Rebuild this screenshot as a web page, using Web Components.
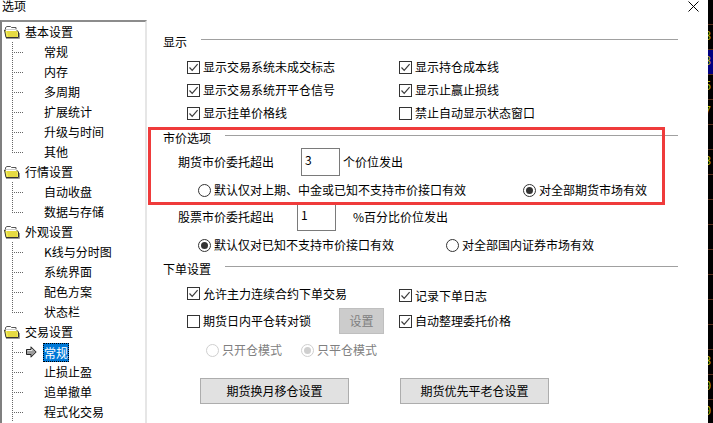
<!DOCTYPE html>
<html>
<head>
<meta charset="utf-8">
<title>选项</title>
<style>
html,body{margin:0;padding:0;background:#fff;width:713px;height:423px;overflow:hidden;}
</style>
</head>
<body>
<x-options-dialog></x-options-dialog>
<script>
(function () {
  const FONT = `"Noto Sans CJK SC","Liberation Sans",sans-serif`;

  /* =========================
    CHECKBOX
  ========================= */
  class XCheck extends HTMLElement {
    constructor() {
      super();
      this.attachShadow({ mode: "open" });
      const mark = this.hasAttribute("checked")
        ? `<svg width="11" height="11" viewBox="0 0 11 11"><path d="M1.5 5.5 L4.2 8.3 L9.6 2.2" fill="none" stroke="#3c3c3c" stroke-width="1.2"/></svg>`
        : "";
      this.shadowRoot.innerHTML = `
        <style>
        :host{display:flex;align-items:center;height:100%;}
        .box{width:11px;height:11px;border:1px solid #333;background:#fff;margin-right:3px;flex:none;}
        svg{display:block;}
        span{white-space:nowrap;}
        </style>
        <div class="box">${mark}</div><span><slot></slot></span>`;
    }
  }
  customElements.define("x-check", XCheck);

  /* =========================
    RADIO
  ========================= */
  class XRadio extends HTMLElement {
    constructor() {
      super();
      this.attachShadow({ mode: "open" });
      const off = this.hasAttribute("disabled");
      const line = off ? "#cfcfcf" : "#333";
      const dot = off ? "#cfcfcf" : "#333";
      this.shadowRoot.innerHTML = `
        <style>
        :host{display:flex;align-items:center;height:100%;color:${off ? "#808080" : "#000"};}
        .ring{width:11px;height:11px;border:1px solid ${line};border-radius:50%;margin-right:3px;display:flex;align-items:center;justify-content:center;flex:none;background:#fff;}
        .dot{width:7px;height:7px;border-radius:50%;background:${dot};}
        span{white-space:nowrap;}
        </style>
        <div class="ring">${this.hasAttribute("checked") ? '<div class="dot"></div>' : ""}</div><span><slot></slot></span>`;
    }
  }
  customElements.define("x-radio", XRadio);

  /* =========================
    SECTION TITLE WITH RULE
  ========================= */
  class XSection extends HTMLElement {
    constructor() {
      super();
      this.attachShadow({ mode: "open" });
      this.shadowRoot.innerHTML = `
        <style>
        :host{display:flex;height:20px;align-items:center;}
        .rule{flex:1;height:1px;background:#a0a0a0;margin:-5px 0 0 14px;}
        </style>
        <span><slot></slot></span><div class="rule"></div>`;
    }
  }
  customElements.define("x-section", XSection);

  /* =========================
    TEXT BOX
  ========================= */
  class XField extends HTMLElement {
    constructor() {
      super();
      this.attachShadow({ mode: "open" });
      this.shadowRoot.innerHTML = `
        <style>
        :host{display:block;box-sizing:border-box;width:39px;height:28px;border:1px solid #7a7a7a;background:#fff;padding:3px 0 0 3px;line-height:16px;flex:none;}
        </style>
        <slot></slot>`;
    }
  }
  customElements.define("x-field", XField);

  /* =========================
    BUTTON
  ========================= */
  class XButton extends HTMLElement {
    constructor() {
      super();
      this.attachShadow({ mode: "open" });
      const off = this.hasAttribute("disabled");
      this.shadowRoot.innerHTML = `
        <style>
        :host{display:flex;box-sizing:border-box;align-items:center;justify-content:center;height:26px;background:${off ? "#cccccc" : "#e1e1e1"};border:1px solid ${off ? "#bfbfbf" : "#adadad"};color:${off ? "#808080" : "#000"};white-space:nowrap;}
        </style>
        <slot></slot>`;
    }
  }
  customElements.define("x-button", XButton);

  /* =========================
    NAV TREE
  ========================= */
  const FOLDER = `<svg width="16" height="14" viewBox="0 0 16 14">
    <path d="M1.5 4 V2.5 L3 1.5 H6.5 L7.5 2.5 H12 V4" fill="#fff" stroke="#555" stroke-width="1"/>
    <path d="M0.5 5 H12.5 L14.5 7 V12.5 H2 Z" fill="#f4ee58" stroke="#333" stroke-width="1"/>
    <path d="M2 4.5 H12.5 V6 H2 Z" fill="#fff"/>
    <path d="M3 7 H13 M3.5 9 H13 M4 11 H13" stroke="#d6c62c" stroke-width="1"/>
    <path d="M2 13.5 H15.5 V8" fill="none" stroke="#9a9a9a" stroke-width="1"/>
  </svg>`;

  const ARROW = `<svg width="11" height="12" viewBox="0 0 11 12">
    <path d="M0.5 3.5 H5 V0.8 L10.2 6 L5 11.2 V8.5 H0.5 Z" fill="#9c9c9c" stroke="#222" stroke-width="1"/>
    <path d="M1.5 4.5 H6 V3" fill="none" stroke="#e4e4e4" stroke-width="1"/>
  </svg>`;

  const TREE = [
    ["基本设置", ["常规", "内存", "多周期", "扩展统计", "升级与时间", "其他"]],
    ["行情设置", ["自动收盘", "数据与存储"]],
    ["外观设置", ["K线与分时图", "系统界面", "配色方案", "状态栏"]],
    ["交易设置", ["常规", "止损止盈", "追单撤单", "程式化交易"]],
  ];

  class XTree extends HTMLElement {
    constructor() {
      super();
      this.attachShadow({ mode: "open" });
      let html = "";
      TREE.forEach((group, g) => {
        html += `<div class="row head"><span class="ico">${FOLDER}</span><span>${group[0]}</span></div>`;
        group[1].forEach((name, i) => {
          const last = i === group[1].length - 1 && g < TREE.length - 1;
          const sel = g === 3 && i === 0;
          html += `<div class="row child${last ? " last" : ""}">
            <span class="dots"></span>
            <span class="mark">${sel ? ARROW : ""}</span>
            <span class="${sel ? "sel" : "txt"}">${name}</span>
          </div>`;
        });
      });
      this.shadowRoot.innerHTML = `
        <style>
        :host{display:block;box-sizing:border-box;width:147px;height:403px;overflow:hidden;border-top:2px solid #8c8c8c;border-left:2px solid #7f7f7f;border-right:2px solid #e6e6e6;background:#fff;flex:none;}
        .row{display:flex;align-items:center;height:20px;white-space:nowrap;}
        .head{padding-left:2px;margin-top:0;}
        .ico{width:21px;height:14px;flex:none;}
        .ico svg{display:block;}
        .child{
          padding-left:10px;
          background:repeating-linear-gradient(#666 0 1px,transparent 1px 2px) no-repeat 10px 0 / 1px 100%;
        }
        .child.last{background-size:1px 50%;}
        .dots{width:12px;height:1px;flex:none;background:repeating-linear-gradient(90deg,#666 0 1px,transparent 1px 2px);}
        .mark{width:20px;height:12px;flex:none;padding-left:2px;box-sizing:border-box;}
        .mark svg{display:block;}
        .txt{margin-left:0;}
        .sel{margin-left:-1px;padding:0 1px;height:19px;line-height:19px;width:24px;box-sizing:content-box;background:#0078d7;color:#fff;outline:1px dotted #000;outline-offset:-1px;}
        </style>
        ${html}`;
    }
  }
  customElements.define("x-tree", XTree);

  /* =========================
    BACKGROUND QUOTE STRIP
  ========================= */
  class XQuoteStrip extends HTMLElement {
    constructor() {
      super();
      this.attachShadow({ mode: "open" });
      const cells = ["", "3", "3", "5", "7", "", "3", "", "", "", "", "", "", "", "3", "0", "0"];
      this.shadowRoot.innerHTML = `
        <style>
        :host{display:block;width:5px;height:423px;background:#000;overflow:hidden;flex:none;}
        .cell{box-sizing:border-box;height:25px;border-bottom:1px solid #5a2f1c;color:#b4b400;font:12px/24px "Liberation Mono",monospace;text-indent:-4px;white-space:nowrap;overflow:hidden;}
        .cell:first-child{height:21px;}
        .hot{background:#000080;}
        </style>
        ${cells.map((c, i) => `<div class="cell${i === 2 ? " hot" : ""}">${c}</div>`).join("")}`;
    }
  }
  customElements.define("x-quote-strip", XQuoteStrip);

  /* =========================
    DIALOG
  ========================= */
  class XOptionsDialog extends HTMLElement {
    constructor() {
      super();
      this.attachShadow({ mode: "open" });
      this.shadowRoot.innerHTML = `
        <style>
        :host{display:flex;position:relative;width:713px;height:423px;overflow:hidden;font:12px/16px ${FONT};color:#000;background:#fff;}
        .win{flex:1;display:flex;flex-direction:column;min-width:0;}
        .bar{height:20px;flex:none;display:flex;justify-content:space-between;padding:0 9px 0 2px;box-sizing:border-box;}
        .bar .cap{margin-top:-2px;}
        .bar svg{margin-top:1px;}
        .body{flex:1;display:flex;min-height:0;}
        .panel{flex:1;display:flex;flex-direction:column;padding:12px 30px 0 16px;box-sizing:border-box;}
        .r{display:grid;grid-template-columns:212px 1fr;padding-left:24px;}
        .h24{height:24px;}
        .h22{height:22px;}
        .gap3{margin-top:3px;}
        .line{display:flex;align-items:center;height:28px;padding-left:15px;}
        .line .lab{width:123px;flex:none;}
        .stock{margin-top:-1px;}
        .stock .lab{width:119px;}
        .line .tail{margin-left:3px;}
        .stock .tail{margin-left:17px;}
        .line.stock .tail{margin-left:17px;}
        .radios{display:flex;height:28px;padding-left:35px;}
        .radios .first{width:325px;flex:none;}
        .radios.stock2 .first{width:248px;}
        .order1{height:29px;}
        .order1 x-check:last-child{position:relative;top:2px;}
        .order2{height:26px;}
        .order2 .left{display:flex;align-items:center;width:212px;}
        .order2 .left x-check{width:152px;flex:none;}
        .order2 x-button{width:45px;}
        .modes{display:flex;height:32px;padding-left:43px;}
        .modes .first{width:95px;flex:none;}
        .btns{display:flex;margin-top:12px;padding-left:37px;gap:51px;}
        .btns x-button{width:149px;}
        .mark{position:absolute;left:148px;top:127px;width:517px;height:78px;box-sizing:border-box;border:3px solid #ef3b3b;pointer-events:none;}
        </style>
        <div class="win">
          <div class="bar">
            <span class="cap">选项</span>
            <svg width="11" height="11" viewBox="0 0 11 11"><path d="M0.5 0.5 L10.5 10.5 M10.5 0.5 L0.5 10.5" stroke="#000" stroke-width="1" fill="none"/></svg>
          </div>
          <div class="body">
            <x-tree></x-tree>
            <div class="panel">
              <x-section>显示</x-section>
              <div class="r h24 gap3">
                <x-check checked>显示交易系统未成交标志</x-check>
                <x-check checked>显示持仓成本线</x-check>
              </div>
              <div class="r h22">
                <x-check checked>显示交易系统开平仓信号</x-check>
                <x-check checked>显示止赢止损线</x-check>
              </div>
              <div class="r h24">
                <x-check checked>显示挂单价格线</x-check>
                <x-check>禁止自动显示状态窗口</x-check>
              </div>
              <x-section class="gap3">市价选项</x-section>
              <div class="line">
                <span class="lab">期货市价委托超出</span>
                <x-field>3</x-field>
                <span class="tail">个价位发出</span>
              </div>
              <div class="radios">
                <x-radio class="first">默认仅对上期、中金或已知不支持市价接口有效</x-radio>
                <x-radio checked>对全部期货市场有效</x-radio>
              </div>
              <div class="line stock">
                <span class="lab">股票市价委托超出</span>
                <x-field>1</x-field>
                <span class="tail">%百分比价位发出</span>
              </div>
              <div class="radios stock2">
                <x-radio class="first" checked>默认仅对已知不支持市价接口有效</x-radio>
                <x-radio>对全部国内证券市场有效</x-radio>
              </div>
              <x-section>下单设置</x-section>
              <div class="r order1">
                <x-check checked>允许主力连续合约下单交易</x-check>
                <x-check checked>记录下单日志</x-check>
              </div>
              <div class="r order2">
                <div class="left">
                  <x-check>期货日内平仓转对锁</x-check>
                  <x-button disabled>设置</x-button>
                </div>
                <x-check checked>自动整理委托价格</x-check>
              </div>
              <div class="modes">
                <x-radio class="first" disabled>只开仓模式</x-radio>
                <x-radio disabled checked>只平仓模式</x-radio>
              </div>
              <div class="btns">
                <x-button>期货换月移仓设置</x-button>
                <x-button>期货优先平老仓设置</x-button>
              </div>
            </div>
          </div>
        </div>
        <x-quote-strip></x-quote-strip>
        <div class="mark"></div>`;
    }
  }
  customElements.define("x-options-dialog", XOptionsDialog);
})();
</script>
</body>
</html>
